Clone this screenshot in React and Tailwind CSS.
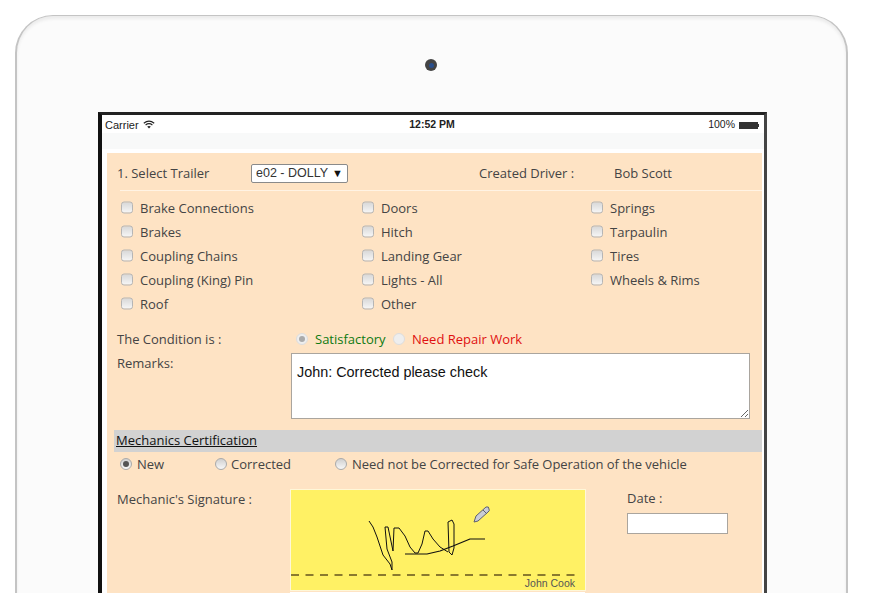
const leftItems = ["Brake Connections", "Brakes", "Coupling Chains", "Coupling (King) Pin", "Roof"];
const midItems = ["Doors", "Hitch", "Landing Gear", "Lights - All", "Other"];
const rightItems = ["Springs", "Tarpaulin", "Tires", "Wheels & Rims"];

function CheckItem({ label }) {
  return (
    <div className="flex h-6 items-center gap-[7px]">
      <span className="size-[12px] shrink-0 -translate-y-[1.5px] rounded-[3px] border border-[#b5b5b5] bg-linear-to-b from-[#d8d8d8] to-[#f6f6f6]" />
      <span>{label}</span>
    </div>
  );
}

function CheckColumn({ items, className }) {
  return (
    <div className={className}>
      {items.map((item) => (
        <CheckItem key={item} label={item} />
      ))}
    </div>
  );
}

function Radio({ checked, faded }) {
  return (
    <span
      className={`flex size-[12px] shrink-0 -translate-y-px items-center justify-center rounded-full border ${
        faded ? "border-[#ddd] bg-[#eee]" : "border-[#aaa] bg-linear-to-b from-[#d0d0d0] to-[#f8f8f8]"
      }`}
    >
      {checked && <span className={`size-[6px] rounded-full ${faded ? "bg-[#aaa]" : "bg-[#555]"}`} />}
    </span>
  );
}

function Signature() {
  return (
    <div className="relative h-[102px] w-[296px] border border-[#fff7d8] bg-[#fff164]">
      <svg viewBox="0 0 294 100" className="h-full w-full" fill="none">
        <g stroke="#111" strokeWidth="1" strokeLinejoin="round">
          <polyline points="78,31 82,37 86,47 90,59 92,65 99,74 101,80 101,72 96,59 94,37 97,37 102,61 103,38 108,38 114,46 119,57 124,63 127,63 131,54 134,41 137,41 142,49 149,57 157,62" />
          <polyline points="114,64 136,64 149,61 162,56 179,49 194,49" strokeWidth="1.2" />
          <path d="M157 32 L158 62 L161 65 L163 58 L163 34 L161 30 Z" />
        </g>
        <line x1="0" y1="85" x2="288" y2="85" stroke="#8a7a2e" strokeWidth="2" strokeDasharray="8 6.5" />
        <path d="M183 32 L185 26 L195 17 Q198 16 198 19 Q199 21 197 22 L187 31 Z" fill="#c9ccd6" stroke="#5d6070" strokeWidth="1" />
        <path d="M192 20 L196 24" stroke="#5d6070" strokeWidth="1" />
      </svg>
      <span className="absolute right-[10px] bottom-[2px] font-['Liberation_Sans',sans-serif] text-[10.5px] leading-none text-[#555]">John Cook</span>
    </div>
  );
}

export default function App() {
  return (
    <div className="h-[610px] w-[876px] overflow-hidden bg-white pt-[15px] pl-[15px] font-['Open_Sans',sans-serif] text-[13px] text-[#444]">
      {/* tablet body */}
      <div className="relative flex h-[578px] w-[833px] flex-col rounded-t-[38px] border-x-2 border-t border-[#c4c4c4] bg-[#fbfbfb] pt-[96px] pl-[81px] shadow-[inset_0_3px_3px_#ececec]">
        <span className="absolute top-[43px] left-[408px] flex size-[12px] items-center justify-center rounded-full bg-[#444]">
          <span className="size-[5px] rounded-full bg-[#2a4f8c]" />
        </span>

        {/* screen */}
        <div className="flex min-h-0 w-[669px] flex-1 flex-col border-t-[3px] border-r-[3px] border-l-4 border-t-[#222] border-r-[#444] border-l-[#111] bg-white">
          <div className="flex h-[18px] items-center justify-between px-[3px] pt-[2px] font-['Liberation_Sans',sans-serif] text-[11px] text-[#222]">
            <div className="flex w-[120px] items-center gap-[4px]">
              <span>Carrier</span>
              <svg viewBox="0 0 12 9" className="h-[9px] w-[12px] -translate-y-[1px]" fill="none" stroke="#222" strokeWidth="1.2">
                <path d="M0.8 3.2 Q6 -0.8 11.2 3.2" />
                <path d="M2.6 5 Q6 2.4 9.4 5" />
                <path d="M6 8.6 L4.2 6.6 Q6 5.4 7.8 6.6 Z" fill="#222" stroke="none" />
              </svg>
            </div>
            <span className="-ml-[2px] text-[10.5px] font-bold">12:52 PM</span>
            <div className="flex w-[120px] items-center justify-end gap-[4px] pr-[2px] text-[10.5px]">
              <span>100%</span>
              <span className="h-[7px] w-[19px] bg-[#333]" />
              <span className="-ml-[4px] h-[3px] w-[1px] bg-[#333]" />
            </div>
          </div>
          <div className="h-[16px] bg-[#f8f9f9]" />
          <div className="h-[4px]" />

          {/* form */}
          <div className="ml-[5px] min-h-0 w-[655px] flex-1 overflow-hidden bg-[#fee3c4]">
            <div className="flex h-[37px] items-center pt-[4px] pl-[10px]">
              <span className="w-[134px]">1. Select Trailer</span>
              <div className="flex h-[19px] w-[97px] items-center justify-between rounded-[2px] border border-[#8a8a8a] bg-white pr-[4px] pl-[4px] font-['Liberation_Sans',sans-serif] text-[12.5px] whitespace-nowrap text-[#333]">
                <span>e02 - DOLLY</span>
                <span className="text-[11px] text-[#111]">▼</span>
              </div>
              <span className="ml-[131px] w-[135px]">Created Driver :</span>
              <span>Bob Scott</span>
            </div>
            <div className="ml-[13px] h-px bg-[#fff3e4]" />

            <div className="flex pt-[6px] pl-[14px]">
              <CheckColumn items={leftItems} className="w-[241px]" />
              <CheckColumn items={midItems} className="w-[229px]" />
              <CheckColumn items={rightItems} />
            </div>

            <div className="mt-[11px] flex h-[24px] items-center pl-[10px]">
              <span className="w-[179px]">The Condition is :</span>
              <Radio checked faded />
              <span className="ml-[7px] w-[78px] font-medium text-[#0e7a12]">Satisfactory</span>
              <Radio faded />
              <span className="ml-[7px] font-medium text-[#e01010]">Need Repair Work</span>
            </div>

            <div className="mt-px flex pl-[10px]">
              <span className="w-[174px] pt-[1px]">Remarks:</span>
              <textarea
                className="h-[66px] w-[459px] border border-[#aaa59e] bg-white px-[5px] py-[10px] font-['Liberation_Sans',sans-serif] text-[14.4px] leading-[17px] text-[#111]"
                defaultValue="John: Corrected please check"
              />
            </div>

            <div className="mt-[11px] ml-[7px] flex h-[22px] items-center bg-[#d2d2d2] pl-[2px] text-[#111] underline">
              Mechanics Certification
            </div>

            <div className="flex h-[25px] items-center pl-[13px]">
              <Radio checked />
              <span className="ml-[5px] w-[78px]">New</span>
              <Radio />
              <span className="ml-[4px] w-[47px]">Corrected</span>
              <span className="w-[57px]" />
              <Radio />
              <span className="ml-[5px] tracking-[-0.05px]">Need not be Corrected for Safe Operation of the vehicle</span>
            </div>

            <div className="mt-[12px] flex pl-[10px]">
              <span className="w-[173px] pt-[1px]">Mechanic's Signature :</span>
              <Signature />
              <div className="ml-[41px] flex flex-col">
                <span>Date :</span>
                <input className="mt-[4px] h-[21px] w-[101px] border border-[#aaa59e] bg-white" />
              </div>
            </div>
            <div className="mt-px ml-[183px] h-[10px] w-[295px] bg-white" />
          </div>
        </div>
      </div>
    </div>
  );
}
